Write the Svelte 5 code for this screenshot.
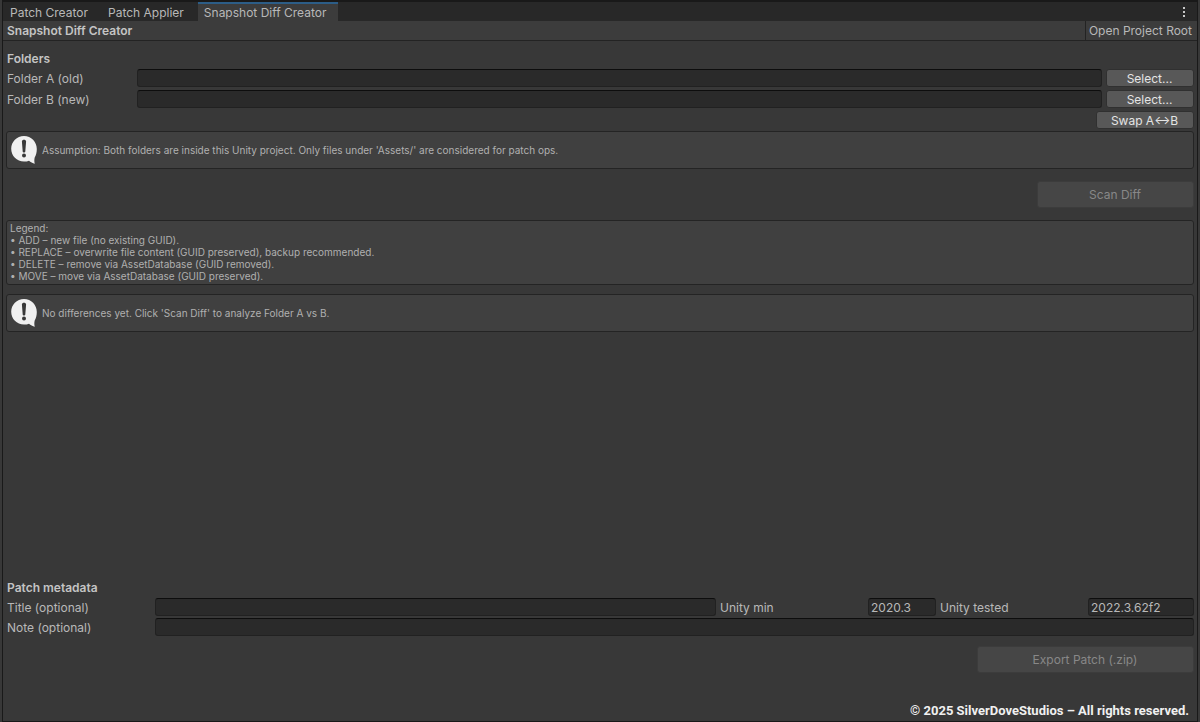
<script lang="ts">
  const tabs = ["Patch Creator", "Patch Applier", "Snapshot Diff Creator"];

  let active = $state("Snapshot Diff Creator");
  let folderA = $state("");
  let folderB = $state("");
  let title = $state("");
  let note = $state("");
  let unityMin = $state("2020.3");
  let unityTested = $state("2022.3.62f2");

  const canScan = $derived(folderA !== "" && folderB !== "");

  function swap() {
    [folderA, folderB] = [folderB, folderA];
  }
</script>

{#snippet help(text: string)}
  <div class="box help">
    <svg class="bubble" viewBox="0 0 28 30" aria-hidden="true">
      <path
        fill="#f0f0f0"
        d="M14 1C6.8 1 1.2 6.7 1.2 13.8S6.8 26.600 14 26.600c1.900 0 3.600-.3 5-.9 1.500 1.300 3.700 2.500 5.800 3-.6-1.800-.6-4.200-.1-6.300 1.300-2.200 2.100-5 2.100-8.400C26.800 6.700 21.200 1 14 1z"
      />
      <path fill="#383838" d="M11.900 6.400c0-2.300 4.200-2.300 4.200 0l-.8 10c-.1 1.400-2.500 1.400-2.600 0z" />
      <circle fill="#383838" cx="14" cy="20.400" r="2" />
    </svg>
    <p>{text}</p>
  </div>
{/snippet}

<div class="window">
  <div class="tabs" role="tablist">
    {#each tabs as tab}
      <button
        class="tab"
        class:active={tab === active}
        role="tab"
        aria-selected={tab === active}
        onclick={() => (active = tab)}>{tab}</button>
    {/each}
    <button class="menu" aria-label="Menu">
      <svg viewBox="0 0 4 12" fill="#c8c8c8" aria-hidden="true">
        <rect x="1" y="1" width="2" height="2" />
        <rect x="1" y="5" width="2" height="2" />
        <rect x="1" y="9" width="2" height="2" />
      </svg>
    </button>
  </div>

  <header class="toolbar">
    <h1>Snapshot Diff Creator</h1>
    <button class="root">Open Project Root</button>
  </header>

  <main>
    <section class="folders">
      <h2>Folders</h2>
      <div class="row">
        <label for="folder-a">Folder A (old)</label>
        <input id="folder-a" type="text" bind:value={folderA} />
        <button class="btn">Select...</button>
      </div>
      <div class="row">
        <label for="folder-b">Folder B (new)</label>
        <input id="folder-b" type="text" bind:value={folderB} />
        <button class="btn">Select...</button>
      </div>
      <button class="btn swap" onclick={swap}>Swap A↔B</button>
    </section>

    {@render help("Assumption: Both folders are inside this Unity project. Only files under 'Assets/' are considered for patch ops.")}

    <button class="btn large scan" disabled={!canScan}>Scan Diff</button>

    <div class="box legend">
      <p>Legend:</p>
      <p>• ADD – new file (no existing GUID).</p>
      <p>• REPLACE – overwrite file content (GUID preserved), backup recommended.</p>
      <p>• DELETE – remove via AssetDatabase (GUID removed).</p>
      <p>• MOVE – move via AssetDatabase (GUID preserved).</p>
    </div>

    {@render help("No differences yet. Click 'Scan Diff' to analyze Folder A vs B.")}

    <section class="meta">
      <h2>Patch metadata</h2>
      <div class="row">
        <label for="title">Title (optional)</label>
        <input id="title" type="text" bind:value={title} />
        <label for="unity-min">Unity min</label>
        <input id="unity-min" class="min" type="text" bind:value={unityMin} />
        <label for="unity-tested">Unity tested</label>
        <input id="unity-tested" class="tested" type="text" bind:value={unityTested} />
      </div>
      <div class="row">
        <label for="note">Note (optional)</label>
        <input id="note" type="text" bind:value={note} />
      </div>
    </section>

    <button class="btn large export" disabled>Export Patch (.zip)</button>
    <footer>© 2025 SilverDoveStudios – All rights reserved.</footer>
  </main>
</div>

<style>
  :global(body) {
    background: #383838;
  }

  .window {
    display: flex;
    flex-direction: column;
    box-sizing: border-box;
    min-height: 100vh;
    margin: 0 2px;
    border: 1px solid #191919;
    border-top-width: 2px;
    background: #383838;
    color: #b8b8b8;
    font: 12px/18px Inter, "Liberation Sans", sans-serif;
  }

  button,
  input {
    box-sizing: border-box;
    margin: 0;
    font: inherit;
    color: inherit;
  }

  h1,
  h2,
  p {
    margin: 0;
    font-size: inherit;
  }

  h1,
  h2 {
    font-weight: 600;
    color: #c4c4c4;
  }

  .tabs {
    display: flex;
    height: 19px;
    padding-left: 1px;
    background: #282828;
  }

  .tab {
    padding: 0 14px 0 6px;
    border: 0;
    border-top: 2px solid transparent;
    background: none;
    line-height: 17px;
    white-space: nowrap;
  }

  .tab.active {
    padding-right: 12px;
    border-top-color: #2c5d87;
    background: #3c3c3c;
  }

  .menu {
    display: flex;
    align-items: center;
    margin-left: auto;
    padding: 0 11px;
    border: 0;
    background: none;
  }

  .menu svg {
    width: 4px;
    height: 12px;
  }

  .toolbar {
    display: flex;
    justify-content: space-between;
    height: 19px;
    border-bottom: 1px solid #232323;
    background: #3c3c3c;
    line-height: 20px;
  }

  .toolbar h1 {
    padding-left: 4px;
  }

  .root {
    padding: 0 5px 0 3px;
    border: 0;
    border-left: 1px solid #232323;
    background: none;
  }

  main {
    display: flex;
    flex: 1;
    flex-direction: column;
    padding: 9px 3px 0;
  }

  .folders,
  .meta {
    display: flex;
    flex-direction: column;
    padding-left: 1px;
  }

  .folders {
    gap: 3px;
    margin-bottom: 2px;
  }

  .folders h2 {
    margin-bottom: -2px;
  }

  .row {
    display: flex;
    gap: 4px;
    height: 18px;
  }

  label {
    flex: none;
    width: 126px;
    line-height: 20px;
  }

  input {
    flex: 1;
    min-width: 0;
    height: 18px;
    padding: 0 2px;
    border: 1px solid #212121;
    border-top-color: #0d0d0d;
    border-radius: 3px;
    background: #2a2a2a;
    outline: none;
    line-height: 16px;
  }

  input:focus {
    border-color: #3a79bb;
  }

  .btn {
    width: 88px;
    height: 18px;
    padding: 1px 1px 0 0;
    border: 1px solid #303030;
    border-radius: 3px;
    background: #585858;
    color: #e4e4e4;
    line-height: 16px;
  }

  .btn:hover:enabled {
    background: #676767;
  }

  .btn:disabled {
    border-color: #3c3c3c;
    background: #464646;
    color: #888;
  }

  .swap {
    align-self: flex-end;
    width: 98px;
  }

  .large {
    align-self: flex-end;
    height: 27px;
  }

  .scan {
    width: 157px;
    margin: 12px 0;
  }

  .export {
    width: 217px;
    margin-top: 10px;
  }

  .box {
    border: 1px solid #242424;
    border-radius: 3px;
    background: #404040;
    color: #b0b0b0;
    font-size: 10px;
    line-height: 12px;
  }

  .help {
    display: flex;
    align-items: center;
    gap: 4px;
    height: 36px;
    padding: 0 3px;
  }

  .bubble {
    width: 28px;
    height: 30px;
  }

  .legend {
    margin-bottom: 9px;
    padding: 1px 3px 2px;
  }

  .meta {
    gap: 2px;
    margin-top: auto;
  }

  .meta h2 {
    margin-bottom: -1px;
  }

  .meta label {
    width: 144px;
  }

  .meta .min {
    flex: none;
    width: 68px;
  }

  .meta .tested {
    flex: none;
    width: 106px;
  }

  footer {
    margin: 29px 5px 1px;
    color: #f0f0f0;
    font-family: Roboto, "Liberation Sans", sans-serif;
    font-size: 13px;
    font-weight: 700;
    text-align: right;
  }
</style>
